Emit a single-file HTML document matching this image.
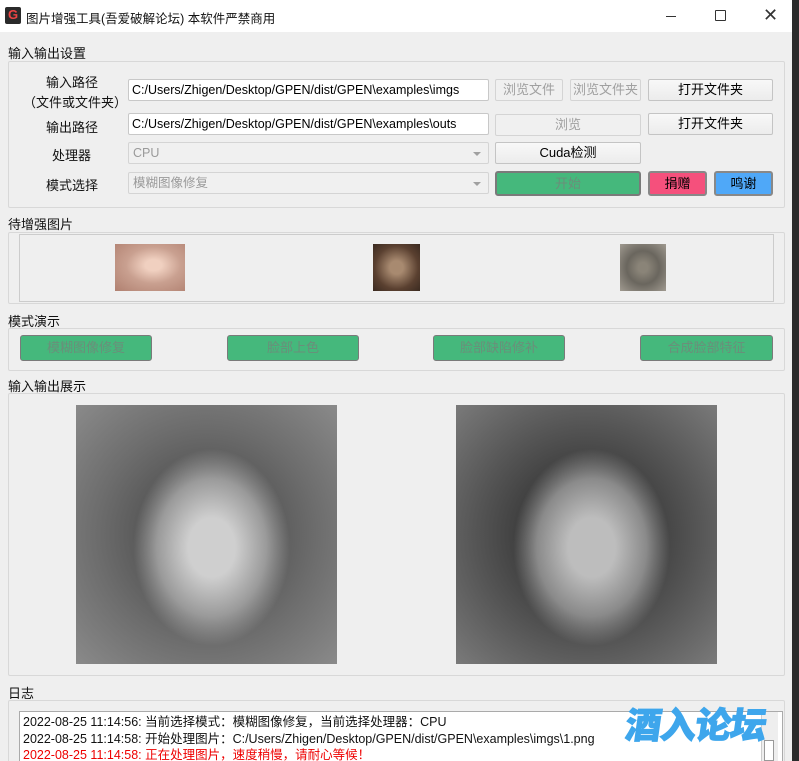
<!DOCTYPE html>
<html><head><meta charset="utf-8"><style>
*{margin:0;padding:0;box-sizing:border-box}
body{width:799px;height:761px;overflow:hidden;background:#efefef;font-family:"Liberation Sans","Noto Sans CJK SC",sans-serif;font-size:13px;color:#000;position:relative}
.win{position:absolute;left:0;top:0;width:792px;height:761px;background:#efefef;overflow:hidden}
.side{position:absolute;left:792px;top:0;width:7px;height:761px;background:#2b2b2b}
.tb{position:absolute;left:0;top:0;width:792px;height:32px;background:#fff}
.a{position:absolute}
.lbl{position:absolute;font-size:13px;color:#111;white-space:nowrap}
.grp{position:absolute;border:1px solid #d8d8d8;border-radius:2px}
.inp{position:absolute;background:#fff;border:1px solid #c8c8c8;border-radius:2px;height:22px;line-height:20px;padding-left:3px;font-size:12.5px;white-space:nowrap;overflow:hidden}
.btn{position:absolute;background:linear-gradient(#f8f8f8,#ececec);border:1px solid #c4c4c4;border-radius:2px;text-align:center;font-size:13px;line-height:20px;height:22px}
.dis{color:#a0a0a0;background:#f0f0f0;border-color:#d4d4d4}
.cmb{position:absolute;background:#f0f0f0;border:1px solid #d4d4d4;border-radius:2px;height:22px;line-height:20px;padding-left:4px;color:#9a9a9a;font-size:12.5px}
.cmb:after{content:"";position:absolute;right:7px;top:9px;border-left:4px solid transparent;border-right:4px solid transparent;border-top:4px solid #a0a0a0}
.g{position:absolute;background:#45b87c;border:1px solid #7a7a7a;border-radius:3px;text-align:center;color:#6b8e7a;line-height:24px;font-size:13px}
</style></head><body>
<div class="side"></div>
<div class="win">
<div class="tb">
 <div class="a" style="left:5px;top:7px;width:16px;height:17px;background:#2a2a2a;border-radius:2px;color:#e44;font-weight:bold;font-size:13px;line-height:15px;text-align:center">G</div>
 <div class="lbl" style="left:26px;top:8px;font-size:12.5px">图片增强工具(吾爱破解论坛) 本软件严禁商用</div>
 <div class="a" style="left:666px;top:16px;width:10px;height:1px;background:#333"></div>
 <div class="a" style="left:715px;top:10px;width:11px;height:11px;border:1.5px solid #333;border-radius:1px"></div>
 <div class="lbl" style="left:763px;top:5px;font-size:18px;color:#333">✕</div>
</div>
<div class="lbl" style="left:8px;top:43px">输入输出设置</div>
<div class="grp" style="left:8px;top:61px;width:777px;height:147px"></div>
<div class="lbl" style="left:46px;top:72px">输入路径</div>
<div class="lbl" style="left:23px;top:92px">（文件或文件夹）</div>
<div class="inp" style="left:128px;top:79px;width:361px">C:/Users/Zhigen/Desktop/GPEN/dist/GPEN\examples\imgs</div>
<div class="btn dis" style="left:495px;top:79px;width:68px">浏览文件</div>
<div class="btn dis" style="left:570px;top:79px;width:71px">浏览文件夹</div>
<div class="btn" style="left:648px;top:79px;width:125px">打开文件夹</div>
<div class="lbl" style="left:46px;top:117px">输出路径</div>
<div class="inp" style="left:128px;top:113px;width:361px">C:/Users/Zhigen/Desktop/GPEN/dist/GPEN\examples\outs</div>
<div class="btn dis" style="left:495px;top:114px;width:146px">浏览</div>
<div class="btn" style="left:648px;top:113px;width:125px">打开文件夹</div>
<div class="lbl" style="left:52px;top:145px">处理器</div>
<div class="cmb" style="left:128px;top:142px;width:361px">CPU</div>
<div class="btn" style="left:495px;top:142px;width:146px">Cuda检测</div>
<div class="lbl" style="left:46px;top:175px">模式选择</div>
<div class="cmb" style="left:128px;top:172px;width:361px">模糊图像修复</div>
<div class="g" style="left:495px;top:171px;width:146px;height:25px;border-width:2px;line-height:21px">开始</div>
<div class="a" style="left:648px;top:171px;width:59px;height:25px;background:#f5507c;border:2px solid #888;border-radius:3px;text-align:center;line-height:21px">捐赠</div>
<div class="a" style="left:714px;top:171px;width:59px;height:25px;background:#4fa8f8;border:2px solid #888;border-radius:3px;text-align:center;line-height:21px">鸣谢</div>

<div class="lbl" style="left:8px;top:214px">待增强图片</div>
<div class="grp" style="left:8px;top:232px;width:777px;height:72px"></div>
<div class="a" style="left:19px;top:234px;width:755px;height:68px;border:1px solid #ccc"></div>
<div class="a" style="left:115px;top:244px;width:70px;height:47px;background:radial-gradient(ellipse at 55% 45%,#f0d0c0 15%,#c9a090 50%,#b08070)"></div>
<div class="a" style="left:373px;top:244px;width:47px;height:47px;background:radial-gradient(ellipse at 50% 50%,#a88a70 20%,#5a4030 65%,#3a2a20)"></div>
<div class="a" style="left:620px;top:244px;width:46px;height:47px;background:radial-gradient(ellipse at 50% 50%,#8a8478 15%,#6a665e 50%,#a09a90)"></div>

<div class="lbl" style="left:8px;top:311px">模式演示</div>
<div class="grp" style="left:8px;top:328px;width:777px;height:43px"></div>
<div class="g" style="left:20px;top:335px;width:132px;height:26px">模糊图像修复</div>
<div class="g" style="left:227px;top:335px;width:132px;height:26px">脸部上色</div>
<div class="g" style="left:433px;top:335px;width:132px;height:26px">脸部缺陷修补</div>
<div class="g" style="left:640px;top:335px;width:133px;height:26px">合成脸部特征</div>

<div class="lbl" style="left:8px;top:376px">输入输出展示</div>
<div class="grp" style="left:8px;top:393px;width:777px;height:283px"></div>
<div class="a" style="left:76px;top:405px;width:261px;height:259px;background:radial-gradient(ellipse 30% 38% at 52% 55%,#cfcfcf 30%,#9a9a9a 70%,transparent 100%),radial-gradient(ellipse at 50% 50%,#555 30%,#6d6d6d 60%,#8a8a8a)"></div>
<div class="a" style="left:456px;top:405px;width:261px;height:259px;background:radial-gradient(ellipse 30% 38% at 52% 55%,#bdbdbd 30%,#8a8a8a 70%,transparent 100%),radial-gradient(ellipse at 50% 50%,#3a3a3a 30%,#555 60%,#7a7a7a)"></div>

<div class="lbl" style="left:8px;top:683px">日志</div>
<div class="grp" style="left:8px;top:700px;width:777px;height:70px"></div>
<div class="a" style="left:19px;top:711px;width:764px;height:60px;background:#fff;border:1px solid #aaa"></div>
<div class="a" style="left:761px;top:712px;width:17px;height:50px;background:#eee;border-left:1px solid #ccc"></div>
<div class="a" style="left:764px;top:740px;width:10px;height:21px;background:#fff;border:1px solid #999"></div>
<div class="lbl" style="left:23px;top:711px;font-size:12.5px">2022-08-25 11:14:56: 当前选择模式：模糊图像修复，当前选择处理器：CPU</div>
<div class="lbl" style="left:23px;top:728px;font-size:12.5px">2022-08-25 11:14:58: 开始处理图片：C:/Users/Zhigen/Desktop/GPEN/dist/GPEN\examples\imgs\1.png</div>
<div class="lbl" style="left:23px;top:744px;font-size:12.5px;color:#e00">2022-08-25 11:14:58: 正在处理图片，速度稍慢，请耐心等候！</div>
<div class="lbl" style="left:626px;top:697px;font-size:36px;font-weight:900;color:#3ea6ec;letter-spacing:-1px;transform:skewX(-8deg);-webkit-text-stroke:1px #3ea6ec">酒入论坛</div>
</div>
</body></html>
